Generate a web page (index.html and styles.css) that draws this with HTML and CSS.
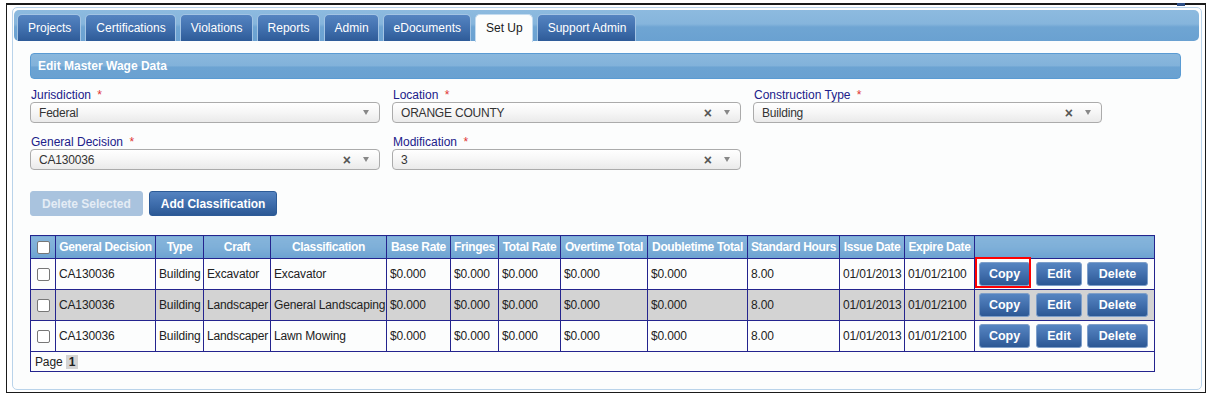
FILE: index.html
```html
<!DOCTYPE html>
<html>
<head>
<meta charset="utf-8">
<link rel="stylesheet" href="styles.css">
</head>
<body>
<div class="frame">
  <span class="corner-mark"></span>
  <div class="panel">
    <div class="tabbar">
      <div class="tab">Projects</div>
      <div class="tab">Certifications</div>
      <div class="tab">Violations</div>
      <div class="tab">Reports</div>
      <div class="tab">Admin</div>
      <div class="tab">eDocuments</div>
      <div class="tab active">Set Up</div>
      <div class="tab">Support Admin</div>
    </div>
    <div class="content">
      <div class="section-head">Edit Master Wage Data</div>
      <div class="form">
        <div class="field">
          <div class="label">Jurisdiction <span class="req">*</span></div>
          <div class="select"><span class="val">Federal</span><span class="arrow"></span></div>
        </div>
        <div class="field">
          <div class="label">Location <span class="req">*</span></div>
          <div class="select"><span class="val">ORANGE COUNTY</span><span class="clear">×</span><span class="arrow"></span></div>
        </div>
        <div class="field">
          <div class="label">Construction Type <span class="req">*</span></div>
          <div class="select"><span class="val">Building</span><span class="clear">×</span><span class="arrow"></span></div>
        </div>
        <div class="field">
          <div class="label">General Decision <span class="req">*</span></div>
          <div class="select"><span class="val">CA130036</span><span class="clear">×</span><span class="arrow"></span></div>
        </div>
        <div class="field">
          <div class="label">Modification <span class="req">*</span></div>
          <div class="select"><span class="val">3</span><span class="clear">×</span><span class="arrow"></span></div>
        </div>
      </div>
      <div class="toolbar">
        <button class="btn disabled">Delete Selected</button>
        <button class="btn">Add Classification</button>
      </div>
      <table class="grid">
        <colgroup>
          <col style="width:25px"><col style="width:100px"><col style="width:48px"><col style="width:67px"><col style="width:116px"><col style="width:64px"><col style="width:48px"><col style="width:62px"><col style="width:87px"><col style="width:100px"><col style="width:92px"><col style="width:65px"><col style="width:70px"><col style="width:180px">
        </colgroup>
        <thead>
          <tr>
            <th class="chk"><span class="cb"></span></th>
            <th>General Decision</th><th>Type</th><th>Craft</th><th>Classification</th><th>Base Rate</th><th>Fringes</th><th>Total Rate</th><th>Overtime Total</th><th>Doubletime Total</th><th>Standard Hours</th><th>Issue Date</th><th>Expire Date</th><th></th>
          </tr>
        </thead>
        <tbody>
          <tr>
            <td class="chk"><span class="cb"></span></td>
            <td>CA130036</td><td>Building</td><td>Excavator</td><td>Excavator</td><td>$0.000</td><td>$0.000</td><td>$0.000</td><td>$0.000</td><td>$0.000</td><td>8.00</td><td>01/01/2013</td><td>01/01/2100</td>
            <td class="actions"><span class="hl"><button class="sbtn copy">Copy</button></span><button class="sbtn edit">Edit</button><button class="sbtn del">Delete</button></td>
          </tr>
          <tr class="alt">
            <td class="chk"><span class="cb"></span></td>
            <td>CA130036</td><td>Building</td><td>Landscaper</td><td>General Landscaping</td><td>$0.000</td><td>$0.000</td><td>$0.000</td><td>$0.000</td><td>$0.000</td><td>8.00</td><td>01/01/2013</td><td>01/01/2100</td>
            <td class="actions"><button class="sbtn copy">Copy</button><button class="sbtn edit">Edit</button><button class="sbtn del">Delete</button></td>
          </tr>
          <tr>
            <td class="chk"><span class="cb"></span></td>
            <td>CA130036</td><td>Building</td><td>Landscaper</td><td>Lawn Mowing</td><td>$0.000</td><td>$0.000</td><td>$0.000</td><td>$0.000</td><td>$0.000</td><td>8.00</td><td>01/01/2013</td><td>01/01/2100</td>
            <td class="actions"><button class="sbtn copy">Copy</button><button class="sbtn edit">Edit</button><button class="sbtn del">Delete</button></td>
          </tr>
        </tbody>
        <tfoot>
          <tr><td colspan="14" class="pager">Page <span class="pg">1</span></td></tr>
        </tfoot>
      </table>
    </div>
  </div>
</div>
</body>
</html>
```

FILE: styles.css
```css
html, body {
  margin: 0;
  padding: 0;
  background: #ffffff;
  font-family: "Liberation Sans", Arial, sans-serif;
  font-size: 12px;
}

.frame {
  position: relative;
  margin: 3px 0 0 6px;
  width: 1190px;
  height: 381px;
  border: 1px solid #1a1a1a;
  border-top-width: 2px;
  padding: 2px 3px 4px 5px;
}

.corner-mark {
  position: absolute;
  top: -2px;
  right: 20px;
  width: 8px;
  height: 3px;
  background: #2d4f86;
}

.panel {
  height: 379px;
  border: 1px solid #b9d3ea;
  border-radius: 5px;
  background: #fcfdfd;
  padding: 2px 2px 0 1px;
}

.tabbar {
  display: flex;
  gap: 4px;
  height: 27px;
  padding: 4px 0 0 3px;
  border-radius: 5px;
  background: linear-gradient(#8dbadf 0%, #86b5dc 45%, #6fa5d3 55%, #6aa1d1 100%);
}

.tab {
  height: 26px;
  line-height: 26px;
  padding: 0 9px 0 10px;
  color: #ffffff;
  font-size: 12px;
  border: 1px solid #a3c4e4;
  border-bottom: 0;
  border-radius: 5px 5px 0 0;
  background: linear-gradient(#5584c1 0%, #4271af 50%, #2e5b98 100%);
}

.tab.active {
  background: #fcfdfd;
  color: #1b1b1b;
  border-color: #c4dbef;
  height: 27px;
}

.content {
  padding: 12px 18px 0 16px;
}

.section-head {
  height: 24px;
  line-height: 24px;
  border: 1px solid #5a9bd3;
  border-radius: 4px;
  padding-left: 7px;
  color: #ffffff;
  font-weight: bold;
  font-size: 12px;
  background: linear-gradient(#8ab8dd 0%, #82b2da 48%, #6ca3d2 55%, #6aa1d1 100%);
}

.form {
  display: grid;
  grid-template-columns: 350px 349px 349px;
  column-gap: 12px;
  row-gap: 12px;
  margin-top: 9px;
}

.label {
  height: 14px;
  line-height: 14px;
  color: #20208a;
  padding-left: 1px;
}

.req {
  color: #e03434;
  margin-left: 3px;
}

.select {
  display: flex;
  align-items: center;
  height: 19px;
  border: 1px solid #ababab;
  border-radius: 4px;
  background: linear-gradient(#ffffff 0%, #f6f6f6 50%, #eaeaea 100%);
  padding: 0 10px 0 8px;
  color: #333333;
}

.select .val {
  flex: 1;
  letter-spacing: -0.2px;
}

.select .clear {
  font-weight: bold;
  color: #555555;
  font-size: 14px;
  margin-right: 12px;
}

.select .arrow {
  width: 0;
  height: 0;
  border-left: 3.5px solid transparent;
  border-right: 3.5px solid transparent;
  border-top: 5px solid #888888;
}

.toolbar {
  display: flex;
  gap: 6px;
  margin: 21px 0 0 0;
}

.btn {
  height: 25px;
  padding: 0 11px;
  border: 1px solid #2d5b97;
  border-radius: 3px;
  background: linear-gradient(#5583c0 0%, #3f6ead 50%, #2c5995 100%);
  color: #ffffff;
  font-family: "Liberation Sans", Arial, sans-serif;
  font-weight: bold;
  font-size: 12px;
}

.btn.disabled {
  background: #a9c3de;
  border-color: #a9c3de;
  color: #e4ecf5;
}

.grid {
  margin: 19px 0 0 0;
  border-collapse: collapse;
  table-layout: fixed;
  width: 1124px;
  border: 1px solid #24248e;
  background: #fcfdfd;
}

.grid th {
  height: 22px;
  padding: 0 1px;
  border: 1px solid #24248e;
  color: #ffffff;
  font-weight: bold;
  font-size: 12px;
  letter-spacing: -0.35px;
  white-space: nowrap;
  overflow: hidden;
  background: linear-gradient(#86b5db 0%, #7eafd8 50%, #6ca2d1 100%);
}

.grid td {
  height: 30px;
  padding: 0 2px 0 3px;
  border: 1px solid #24248e;
  color: #222222;
  letter-spacing: -0.15px;
  white-space: nowrap;
  overflow: hidden;
}

.grid tbody tr.alt td {
  background: #d3d3d3;
}

.grid td.chk, .grid th.chk {
  text-align: center;
  padding: 0;
}

.cb {
  display: inline-block;
  width: 11px;
  height: 11px;
  border: 1px solid #777777;
  border-radius: 2px;
  background: #ffffff;
  vertical-align: middle;
}

.grid td.actions {
  padding: 0 0 0 4px;
  letter-spacing: 0;
  overflow: visible;
  line-height: 24px;
}

.hl {
  position: relative;
  display: inline-block;
  vertical-align: middle;
  margin-right: 6px;
}

.hl::after {
  content: "";
  position: absolute;
  left: -4px;
  top: -5px;
  right: -1px;
  bottom: -2px;
  border: 2px solid #ff0000;
  pointer-events: none;
}

.sbtn {
  height: 24px;
  padding: 0;
  border: 1px solid #7e9fca;
  border-radius: 3px;
  background: linear-gradient(#5685c1 0%, #426fad 50%, #2c5894 100%);
  color: #ffffff;
  font-family: "Liberation Sans", Arial, sans-serif;
  font-weight: bold;
  font-size: 12.5px;
  vertical-align: middle;
  text-align: center;
}

.sbtn.copy {
  width: 51px;
  margin-right: 6px;
}

.hl .sbtn.copy {
  margin-right: 0;
  display: block;
}

.sbtn.edit {
  width: 46px;
  margin-right: 5px;
}

.sbtn.del {
  width: 61px;
}

.grid td.pager {
  height: 19px;
  padding: 0 4px;
  background: #fcfdfd;
}

.pg {
  display: inline-block;
  background: #d4d4d4;
  font-weight: bold;
  padding: 0 3px;
  line-height: 14px;
}
```
